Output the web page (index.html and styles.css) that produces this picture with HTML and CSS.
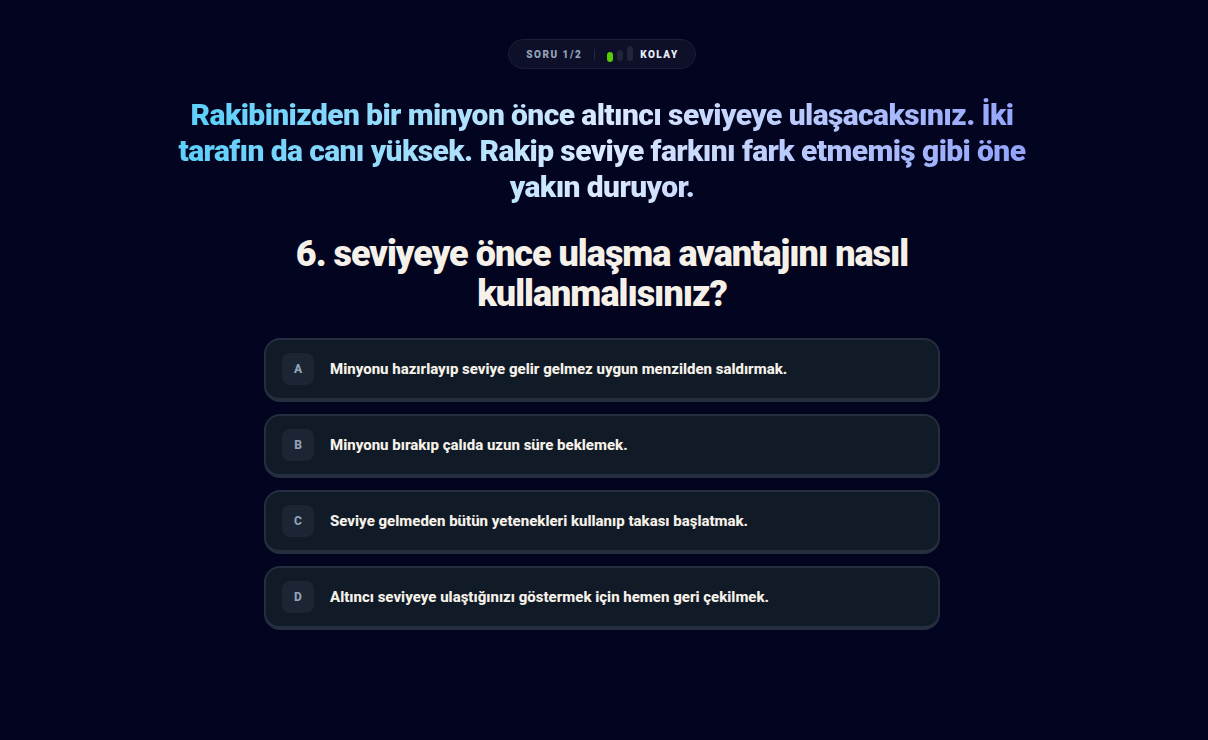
FILE: index.html
```html
<!DOCTYPE html>
<html lang="tr">
<head>
<meta charset="utf-8">
<meta name="viewport" content="width=device-width, initial-scale=1">
<title>Soru 1/2</title>
<link rel="stylesheet" href="styles.css">
</head>
<body>
<main class="quiz">
  <div class="status">
    <span class="status-count">SORU 1/2</span>
    <span class="status-level">
      <svg class="bars" width="28" height="16" viewBox="0 0 28 16" aria-hidden="true">
        <rect x="1" y="6" width="6" height="10" rx="3" fill="#58cc02"/>
        <rect x="11" y="4" width="6" height="11" rx="3" fill="#20253a"/>
        <rect x="21" y="0" width="6" height="15" rx="3" fill="#20253a"/>
      </svg>
      KOLAY
    </span>
  </div>
  <p class="scenario">Rakibinizden bir minyon önce altıncı seviyeye ulaşacaksınız. İki tarafın da canı yüksek. Rakip seviye farkını fark etmemiş gibi öne yakın duruyor.</p>
  <h1 class="question">6. seviyeye önce ulaşma avantajını nasıl kullanmalısınız?</h1>
  <div class="answers">
    <button class="answer" type="button"><span class="key">A</span><span>Minyonu hazırlayıp seviye gelir gelmez uygun menzilden saldırmak.</span></button>
    <button class="answer" type="button"><span class="key">B</span><span>Minyonu bırakıp çalıda uzun süre beklemek.</span></button>
    <button class="answer" type="button"><span class="key">C</span><span>Seviye gelmeden bütün yetenekleri kullanıp takası başlatmak.</span></button>
    <button class="answer" type="button"><span class="key">D</span><span>Altıncı seviyeye ulaştığınızı göstermek için hemen geri çekilmek.</span></button>
  </div>
</main>
</body>
</html>
```
FILE: styles.css
```css
* { box-sizing: border-box; }
body {
  margin: 0;
  min-height: 100vh;
  background: #020420;
  color: #f5f1e8;
  font-family: Roboto, "Liberation Sans", sans-serif;
}
.quiz {
  display: flex;
  flex-direction: column;
  align-items: center;
  padding: 39px 20px 39px 16px;
}
.status {
  display: flex;
  align-items: center;
  height: 30px;
  padding: 0 16px 0 17px;
  border: 1px solid #1b2034;
  border-radius: 15px;
  background: #0d1028;
  font-size: 10px;
  font-weight: 900;
  letter-spacing: 0.15em;
}
.status-count {
  padding-right: 12px;
  border-right: 1px solid #252a3d;
  color: #94a3b8;
}
.status-level {
  display: flex;
  align-items: center;
  gap: 6px;
  padding-left: 11px;
  color: #e8edf8;
}
.scenario {
  max-width: 880px;
  margin: 28px 0 0;
  text-align: center;
  font-size: 30px;
  line-height: 36px;
  font-weight: 900;
  letter-spacing: -0.02em;
  background: linear-gradient(100deg, #5fd0fa 6%, #dbeafe 50%, #93a5fb 96%);
  -webkit-background-clip: text;
  background-clip: text;
  color: transparent;
}
.question {
  max-width: 680px;
  margin: 29px 0 0;
  text-align: center;
  font-size: 36px;
  line-height: 40px;
  font-weight: 900;
  letter-spacing: -1px;
}
.answers {
  display: flex;
  flex-direction: column;
  gap: 12px;
  width: 100%;
  max-width: 676px;
  margin-top: 24px;
}
.answer {
  display: flex;
  align-items: center;
  gap: 16px;
  min-height: 64px;
  padding: 13px 16px;
  border: 2px solid #252e3f;
  border-bottom-width: 4px;
  border-radius: 16px;
  background: #111a27;
  color: inherit;
  font: 800 15px/20px Roboto, "Liberation Sans", sans-serif;
  text-align: left;
}
.key {
  display: grid;
  place-items: center;
  flex: none;
  width: 32px;
  height: 32px;
  border-radius: 8px;
  background: #1b2534;
  color: #94a3b8;
  font-size: 12px;
}
```
